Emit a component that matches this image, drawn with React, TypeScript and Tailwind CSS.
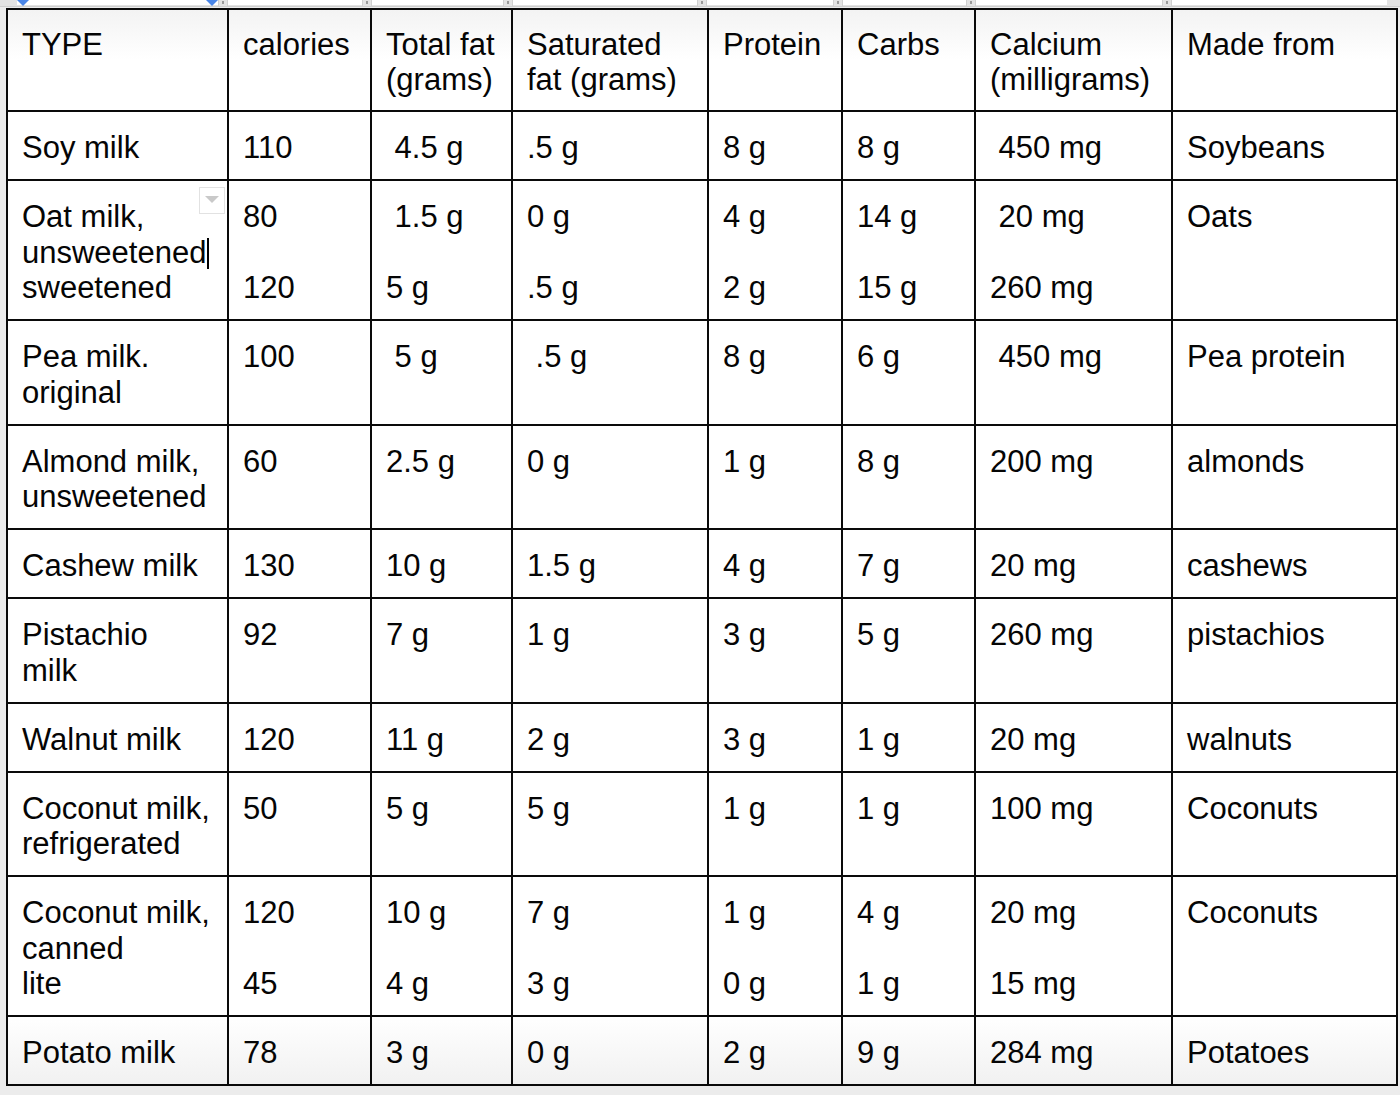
const cols = [221, 143, 141, 196, 134, 133, 197, 225];

const header = [
  "TYPE",
  "calories",
  "Total fat\n(grams)",
  "Saturated\nfat (grams)",
  "Protein",
  "Carbs",
  "Calcium\n(milligrams)",
  "Made from",
];

const rows: string[][] = [
  ["Soy milk", "110", " 4.5 g", ".5 g", "8 g", "8 g", " 450 mg", "Soybeans"],
  ["OAT", "80\n\n120", " 1.5 g\n\n5 g", "0 g\n\n.5 g", "4 g\n\n2 g", "14 g\n\n15 g", " 20 mg\n\n260 mg", "Oats"],
  ["Pea milk.\noriginal", "100", " 5 g", " .5 g", "8 g", "6 g", " 450 mg", "Pea protein"],
  ["Almond milk,\nunsweetened", "60", "2.5 g", "0 g", "1 g", "8 g", "200 mg", "almonds"],
  ["Cashew milk", "130", "10 g", "1.5 g", "4 g", "7 g", "20 mg", "cashews"],
  ["Pistachio\nmilk", "92", "7 g", "1 g", "3 g", "5 g", "260 mg", "pistachios"],
  ["Walnut milk", "120", "11 g", "2 g", "3 g", "1 g", "20 mg", "walnuts"],
  ["Coconut milk,\nrefrigerated", "50", "5 g", "5 g", "1 g", "1 g", "100 mg", "Coconuts"],
  ["Coconut milk,\ncanned\nlite", "120\n\n45", "10 g\n\n4 g", "7 g\n\n3 g", "1 g\n\n0 g", "4 g\n\n1 g", "20 mg\n\n15 mg", "Coconuts"],
  ["Potato milk", "78", "3 g", "0 g", "2 g", "9 g", "284 mg", "Potatoes"],
];

// widths of the white ruler segments between column handles
const segs = [201, 134, 131, 184, 126, 123, 186, 215];

function Marker() {
  return <div className="w-0 h-0 border-x-[6px] border-x-transparent border-t-[6px] border-t-[#4a86e8]" />;
}

function Handle() {
  return (
    <div className="w-[10px] h-[6px] shrink-0 bg-[#e3e3e3] border-x border-[#d0d0d0] flex justify-center pt-[1px]">
      <div className="h-[3px] w-[2px] bg-[#9a9a9a]" />
    </div>
  );
}

function Ruler() {
  return (
    <div className="flex items-start h-[7px] bg-[#e3e3e3] border-b border-[#cfcfcf] pl-[17px]">
      {segs.map((w, i) => (
        <div key={i} className="flex items-start">
          <div
            className="h-[5px] bg-white flex justify-between items-start"
            style={{ width: w }}
          >
            {i === 0 && (
              <>
                <Marker />
                <Marker />
              </>
            )}
          </div>
          {i < segs.length - 1 && <Handle />}
        </div>
      ))}
    </div>
  );
}

function OatCell() {
  return (
    <div>
      <div className="flex justify-between items-start">
        <span>Oat milk,</span>
        <div className="w-[26px] h-[27px] -mt-[12px] -mr-[2px] border border-[#e2e2e2] bg-white flex items-start justify-center pt-[8px]">
          <div className="w-0 h-0 border-x-[7px] border-x-transparent border-t-[7px] border-t-[#c9c9c9]" />
        </div>
      </div>
      <div>
        unsweetened
        <span className="inline-block w-[2px] h-[31px] bg-black align-[-6px] ml-[1px]" />
      </div>
      <div>sweetened</div>
    </div>
  );
}

export default function App() {
  return (
    <div
      className="w-[1400px] h-[1095px] bg-[#ececec] overflow-hidden"
      style={{ fontFamily: '"Liberation Sans", Arial, sans-serif' }}
    >
      <Ruler />
      <div className="pl-[6px] pt-[1px]">
        <table className="table-fixed border-collapse bg-white text-[#050505] text-[31px] leading-[35.5px]">
          <colgroup>
            {cols.map((w, i) => (
              <col key={i} style={{ width: w }} />
            ))}
          </colgroup>
          <thead>
            <tr>
              {header.map((h) => (
                <td
                  key={h}
                  className="border-2 border-[#0a0a0a] align-top pl-[14px] pr-[4px] pt-[16.5px] pb-[12.5px] whitespace-pre bg-gradient-to-b from-[#f3f3f3] via-white to-white"
                >
                  {h}
                </td>
              ))}
            </tr>
          </thead>
          <tbody>
            {rows.map((r, ri) => (
              <tr key={ri}>
                {r.map((c, ci) => (
                  <td
                    key={ci}
                    className={`border-2 border-[#0a0a0a] align-top pl-[14px] pr-[4px] pt-[18px] pb-[13.5px] whitespace-pre ${
                      ri === rows.length - 1
                        ? "bg-gradient-to-b from-white to-[#f1f1f1]"
                        : "bg-white"
                    }`}
                  >
                    {c === "OAT" ? <OatCell /> : c}
                  </td>
                ))}
              </tr>
            ))}
          </tbody>
        </table>
      </div>
    </div>
  );
}
